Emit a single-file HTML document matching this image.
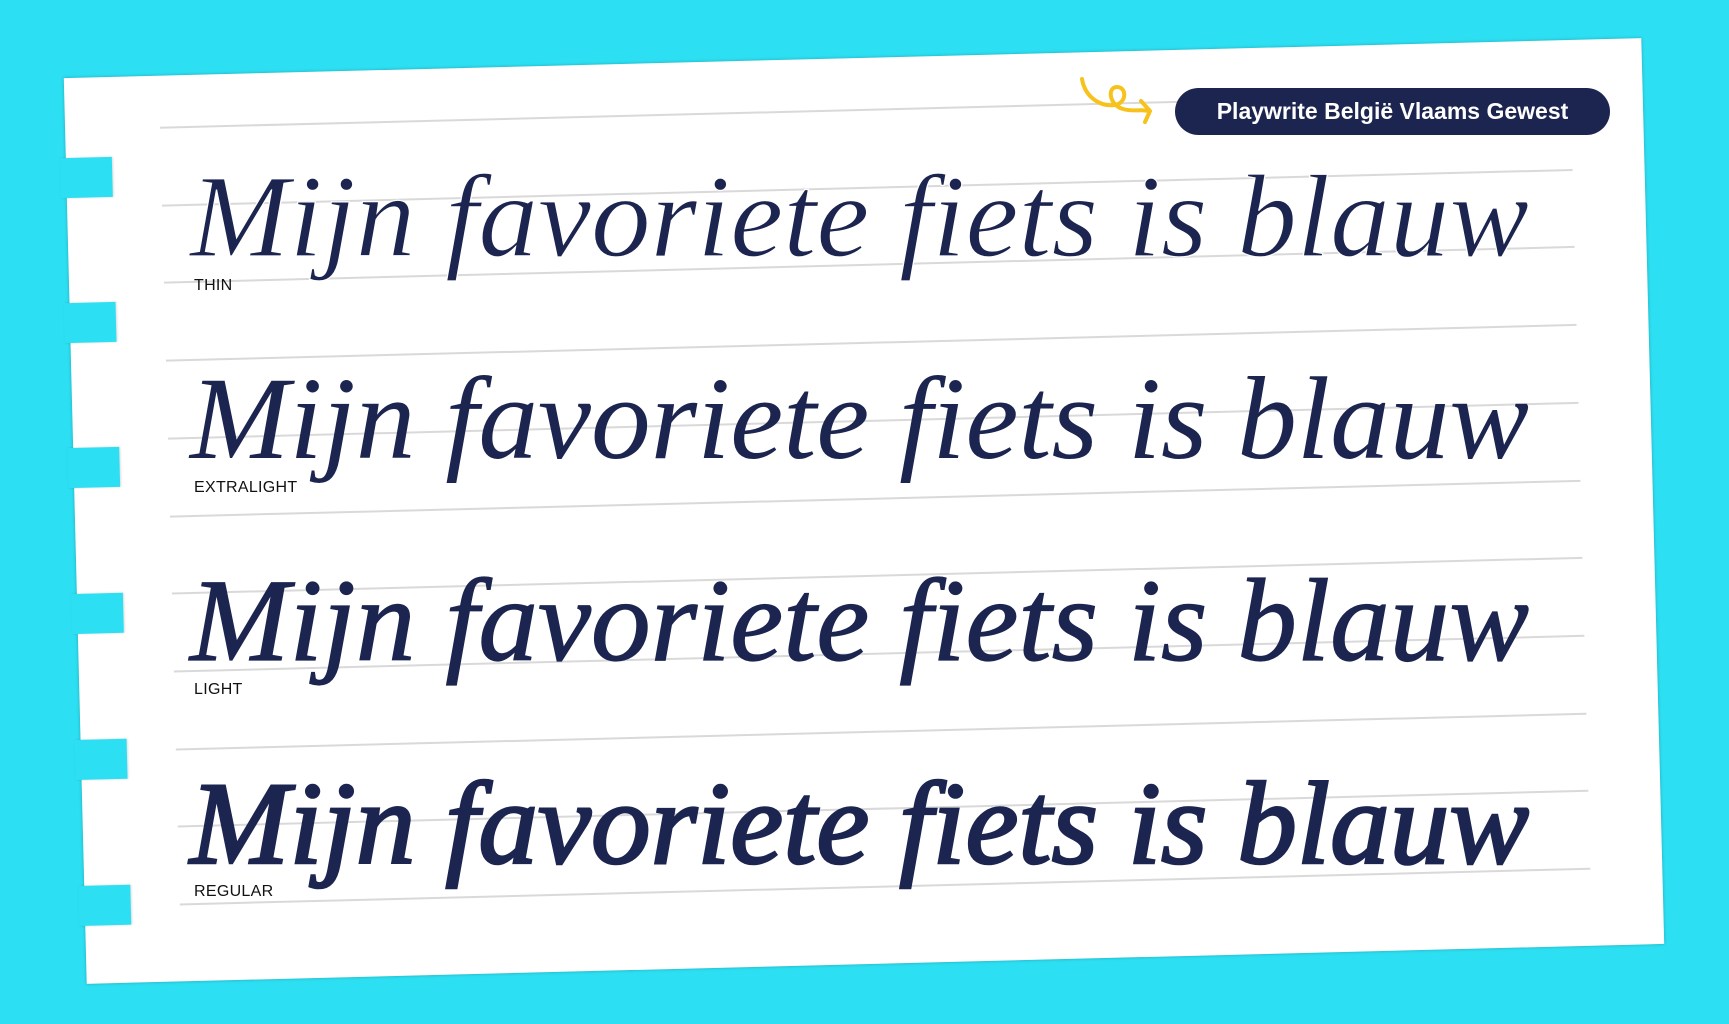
<!DOCTYPE html>
<html><head><meta charset="utf-8">
<style>
html,body{margin:0;padding:0;}
body{width:1729px;height:1024px;background:#2ddff2;overflow:hidden;position:relative;}
#paper{position:absolute;left:75px;top:58px;width:1578px;height:906px;background:#fff;transform:rotate(-1.45deg);transform-origin:789px 453px;box-shadow:0 0 3px rgba(0,0,0,.25);}
.notch{position:absolute;left:-6px;width:52px;height:40px;background:#2ddff2;box-shadow:1px 0 2px rgba(0,0,0,.15);}
.line{position:absolute;left:95px;width:1411px;height:1.5px;background:#d9d9d9;}
.lbl{position:absolute;font-family:"Liberation Sans",sans-serif;font-size:16px;color:#111;letter-spacing:.3px;line-height:16px;}
#badge{position:absolute;left:1175px;top:88px;width:435px;height:47px;border-radius:24px;background:#1c2550;color:#fff;font-family:"Liberation Sans",sans-serif;font-weight:bold;font-size:23px;line-height:47px;text-align:center;}
svg{position:absolute;left:0;top:0;overflow:visible;}
</style></head><body>
<div id="paper">
<div class="notch" style="top:80px"></div>
<div class="notch" style="top:225px"></div>
<div class="notch" style="top:370px"></div>
<div class="notch" style="top:516px"></div>
<div class="notch" style="top:662px"></div>
<div class="notch" style="top:808px"></div>

<div class="line" style="top:51px"></div>
<div class="line" style="top:129px"></div>
<div class="line" style="top:206px"></div>
<div class="line" style="top:284px"></div>
<div class="line" style="top:362px"></div>
<div class="line" style="top:440px"></div>
<div class="line" style="top:517px"></div>
<div class="line" style="top:595px"></div>
<div class="line" style="top:673px"></div>
<div class="line" style="top:750px"></div>
<div class="line" style="top:828px"></div>
</div>

<div class="lbl" style="left:194px;top:278px">THIN</div>
<div class="lbl" style="left:194px;top:480px">EXTRALIGHT</div>
<div class="lbl" style="left:194px;top:682px">LIGHT</div>
<div class="lbl" style="left:194px;top:884px">REGULAR</div>

<svg width="1729" height="1024">
<g font-family="'Liberation Serif',serif" font-style="italic" font-size="118" fill="#1c2550" stroke="#1c2550">
<text x="190" y="256" textLength="1339" lengthAdjust="spacingAndGlyphs" stroke="#fff" stroke-width="1.2">Mijn favoriete fiets is blauw</text>
<text x="190" y="458" textLength="1339" lengthAdjust="spacingAndGlyphs" stroke-width="0">Mijn favoriete fiets is blauw</text>
<text x="190" y="660" textLength="1339" lengthAdjust="spacingAndGlyphs" stroke-width="1.2">Mijn favoriete fiets is blauw</text>
<text x="190" y="863" textLength="1339" lengthAdjust="spacingAndGlyphs" stroke-width="2.6">Mijn favoriete fiets is blauw</text>
</g>
<path d="M1082 79 C1085 97 1100 107 1115 105 C1127 103 1127 87 1117 87 C1107 87 1109 105 1123 109 C1133 112 1141 109 1149 111" fill="none" stroke="#f7c21c" stroke-width="4" stroke-linecap="round"/>
<path d="M1141 101 L1150 111 L1145 122" fill="none" stroke="#f7c21c" stroke-width="4" stroke-linecap="round" stroke-linejoin="round"/>
</svg>
<div id="badge">Playwrite België Vlaams Gewest</div>
</body></html>
